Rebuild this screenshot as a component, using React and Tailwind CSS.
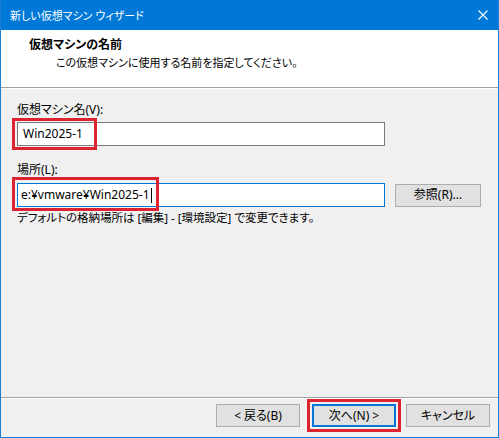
const RedBox = ({ className }) => (
  <div
    className={`pointer-events-none absolute border-[3px] border-[#dc2430] ${className}`}
  ></div>
);

const Button = ({ children, primary, wide }) => (
  <button
    className={`h-[23px] ${wide ? "w-[86px]" : "w-[84px]"} shrink-0 flex items-center justify-center bg-[#e1e1e1] text-[12px] leading-none text-black ${
      primary ? "border-2 border-[#0078d7]" : "border border-[#adadad]"
    }`}
  >
    {children}
  </button>
);

export default function App() {
  return (
    <div className="w-[499px] h-[438px] flex flex-col bg-[#f0f0f0] border-x border-b border-[#1a7fd4] text-[12px] text-black font-['Noto_Sans','Noto_Sans_CJK_JP',sans-serif] [font-feature-settings:'palt'] overflow-hidden">
      {/* title bar */}
      <div className="h-[30px] shrink-0 -mx-px bg-[#0078d7] flex items-center justify-between pl-[10px] pr-[10px] text-white">
        <span className="leading-none text-[11px]">新しい仮想マシン ウィザード</span>
        <svg width="10" height="10" viewBox="0 0 10 10" className="mr-[1px]">
          <path d="M0.5 0.5 L9.5 9.5 M9.5 0.5 L0.5 9.5" stroke="white" strokeWidth="1.1" />
        </svg>
      </div>

      {/* header */}
      <div className="h-[57px] shrink-0 bg-white pt-[7px]">
        <div className="pl-[28px] font-bold leading-[16px]">仮想マシンの名前</div>
        <div className="pl-[55px] mt-[2px] leading-[16px] text-[11px]">
          この仮想マシンに使用する名前を指定してください。
        </div>
      </div>
      <div className="h-[2px] shrink-0 border-t border-[#a0a0a0] border-b border-b-white"></div>

      {/* body */}
      <div className="flex-1 flex flex-col pl-[16px] pt-[13px]">
        <label className="leading-[16px]">仮想マシン名(V):</label>
        <div className="relative mt-[4px] w-[368px] h-[24px] bg-white border border-[#7a7a7a] flex items-center pl-[5px]">
          <span className="leading-none">Win2025-1</span>
          <RedBox className="-left-[6px] -top-[5px] w-[85px] h-[32px]" />
        </div>

        <label className="leading-[16px] mt-[16px]">場所(L):</label>
        <div className="flex items-center gap-[10px] mt-[5px]">
          <div className="relative shrink-0 w-[368px] h-[24px] bg-white border border-[#0078d7] flex items-center pl-[3px]">
            <span className="leading-none">e:¥vmware¥Win2025-1</span>
            <span className="ml-[1px] w-px h-[15px] bg-black"></span>
            <RedBox className="-left-[6px] -top-[7px] w-[147px] h-[34px]" />
          </div>
          <Button wide>参照(R)...</Button>
        </div>
        <div className="mt-[3px] leading-[16px] text-[11.5px]">
          デフォルトの格納場所は [編集] - [環境設定] で変更できます。
        </div>
      </div>

      {/* footer */}
      <div className="h-[2px] shrink-0 border-t border-[#a0a0a0] border-b border-b-white"></div>
      <div className="h-[38px] shrink-0 flex justify-end items-start pt-[5px] pr-[8px]">
        <Button>&lt; 戻る(B)</Button>
        <div className="relative ml-[12px]">
          <Button primary>次へ(N) &gt;</Button>
          <RedBox className="-inset-[5px]" />
        </div>
        <div className="ml-[10px]">
          <Button>キャンセル</Button>
        </div>
      </div>
    </div>
  );
}
